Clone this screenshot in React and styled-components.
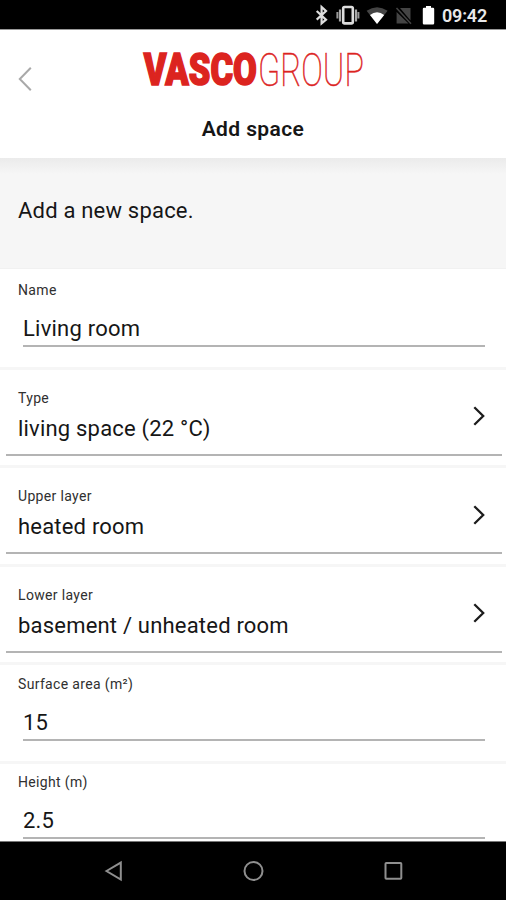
import React from "react";
import styled, { createGlobalStyle } from "styled-components";

const GlobalStyle = createGlobalStyle`
  * { box-sizing: border-box; }
  body { margin: 0; background: #fff; }
`;

const Screen = styled.div`
  width: 506px;
  height: 900px;
  display: flex;
  flex-direction: column;
  overflow: hidden;
  background: #fff;
  color: #161616;
  font-family: Roboto, sans-serif;
`;

const StatusBar = styled.div`
  flex: none;
  height: 30px;
  background: #000;
  border-bottom: 1px solid #999;
  display: flex;
`;

const StatusIcons = styled.svg`
  display: block;
  width: 142px;
  height: 29px;
  margin-left: 300px;
`;

const Clock = styled.span`
  color: #e9e9e9;
  font-size: 18px;
  font-weight: 600;
  line-height: 32px;
  letter-spacing: -0.2px;
  white-space: nowrap;
`;

const Header = styled.header`
  flex: none;
  height: 128px;
  display: grid;
  grid-template-columns: 143px 220px 143px;
  grid-template-rows: 84px 44px;
`;

const BackIcon = styled.svg`
  width: 16px;
  height: 26px;
  margin: 36px 0 0 17px;
`;

const Logo = styled.svg`
  width: 222px;
  height: 40px;
  margin-top: 20px;
  overflow: visible;
`;

const Title = styled.h1`
  grid-column: 1 / -1;
  margin: 0;
  text-align: center;
  font-size: 21px;
  font-weight: 600;
  line-height: 30px;
  letter-spacing: 0.4px;
`;

const Intro = styled.section`
  flex: none;
  height: 111px;
  padding: 38px 18px 0;
  background: linear-gradient(#ebebeb, #f6f6f6 16px);
  border-bottom: 1px solid #f1f1f1;
  font-size: 22px;
  line-height: 30px;
  letter-spacing: 0.2px;
`;

const Form = styled.main`
  flex: 1;
  min-height: 0;
  overflow: hidden;
  border-bottom: 1px solid #777;
`;

const Row = styled.div`
  height: ${(p) => (p.$first ? 97.5 : 98.5)}px;
  border-top: ${(p) => (p.$first ? 0 : 3)}px solid #f6f6f6;
  padding-top: ${(p) => (p.$select ? 20 : p.$first ? 12.5 : 10.7)}px;
`;

const Label = styled.div`
  padding-left: 18px;
  font-size: 14px;
  line-height: 16px;
  letter-spacing: 0.34px;
  color: #303030;
`;

const InputLine = styled.div`
  height: 49px;
  margin: 0 21px 0 23px;
  padding-top: 17px;
  border-bottom: 2px solid #b4b4b4;
  font-size: 22px;
  line-height: 28px;
  letter-spacing: 0.22px;
`;

const SelectLine = styled.div`
  height: 50px;
  margin: 0 4px 0 6px;
  padding: 9px 0 0 12px;
  display: flex;
  justify-content: space-between;
  border-bottom: 2px solid #b4b4b4;
  font-size: 22px;
  line-height: 28px;
  letter-spacing: 0.2px;
`;

const Chevron = styled.svg`
  width: 14px;
  height: 22px;
  margin: -9.5px 16px 0 0;
`;

const NavBar = styled.nav`
  flex: none;
  height: 58px;
  background: #000;
`;

const NavIcons = styled.svg`
  display: block;
  width: 506px;
  height: 58px;
`;

const fields = [
  { label: "Name", value: "Living room" },
  { label: "Type", value: "living space (22 °C)", select: true },
  { label: "Upper layer", value: "heated room", select: true },
  { label: "Lower layer", value: "basement / unheated room", select: true },
  { label: "Surface area (m²)", value: "15" },
  { label: "Height (m)", value: "2.5" },
];

function Field({ label, value, select, first }) {
  return (
    <Row $select={select} $first={first}>
      <Label>{label}</Label>
      {select ? (
        <SelectLine>
          {value}
          <Chevron viewBox="0 0 14 22" fill="none" stroke="#1c1c1c" strokeWidth="2.300">
            <path d="M2.300 2.200 11.200 11 2.300 19.800" />
          </Chevron>
        </SelectLine>
      ) : (
        <InputLine>{value}</InputLine>
      )}
    </Row>
  );
}

export default function App() {
  return (
    <Screen>
      <GlobalStyle />
      <StatusBar>
        <StatusIcons viewBox="300 0 142 29" fill="none">
          <path d="M316.700 11 326 19.600 321.600 23.400V7L326 11 316.700 19.600" stroke="#ddd" strokeWidth="2.200" />
          <rect x="343.200" y="7" width="9.600" height="16.400" rx="1.400" stroke="#ddd" strokeWidth="2.600" />
          <path d="M340 9.500v12M356 9.500v12" stroke="#aaa" strokeWidth="2.200" />
          <path d="M337.400 12v6.500M358.400 12v6.500" stroke="#999" strokeWidth="2" />
          <path d="M366.600 10.800Q377 3.600 387.600 10.800L377 24Z" fill="#444" />
          <path d="M370 15Q377 9.600 384.200 15L377 24Z" fill="#fff" />
          <path d="M400 8H410.500V20.500ZM396.600 12 408.500 23.500H396.600Z" fill="#444" />
          <path d="M396.500 8 411 23.800" stroke="#444" strokeWidth="1.600" />
          <path d="M426 6h5v1.700h2q1.200 0 1.200 1.200v14.400q0 1.200-1.200 1.200h-9q-1.200 0-1.200-1.200V8.900q0-1.200 1.200-1.200h2Z" fill="#fff" />
        </StatusIcons>
        <Clock>09:42</Clock>
      </StatusBar>
      <Header>
        <BackIcon viewBox="0 0 16 26" fill="none" stroke="#a9a9a9" strokeWidth="2">
          <path d="M13.800 1.800 2.800 13 13.800 24.200" />
        </BackIcon>
        <Logo viewBox="0 0 222 40" fill="#dc241f">
          <text x="0.800" y="35.300" fontFamily="Roboto" fontWeight="900" fontSize="44.500" textLength="113" lengthAdjust="spacingAndGlyphs" stroke="#dc241f" strokeWidth="1.700">VASCO</text>
          <text x="115" y="35.600" fontFamily="Roboto" fontWeight="100" fontSize="45.500" textLength="105.800" lengthAdjust="spacingAndGlyphs" stroke="#dc241f" strokeWidth="0.600">GROUP</text>
        </Logo>
        <span />
        <Title>Add space</Title>
      </Header>
      <Intro>Add a new space.</Intro>
      <Form>
        {fields.map((field, i) => (
          <Field key={field.label} {...field} first={i === 0} />
        ))}
      </Form>
      <NavBar>
        <NavIcons viewBox="0 842 506 58" fill="none" stroke="#8f8f8f" strokeWidth="2">
          <path d="M106.500 871 120.800 862.600V879.600Z" />
          <circle cx="253.500" cy="871" r="9" />
          <rect x="385.500" y="863" width="15.800" height="15.800" rx="0.800" />
        </NavIcons>
      </NavBar>
    </Screen>
  );
}
